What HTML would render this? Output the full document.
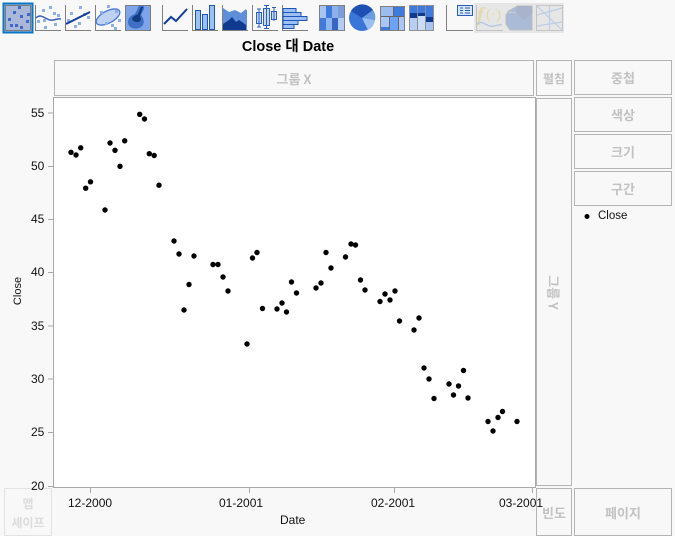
<!DOCTYPE html>
<html><head><meta charset="utf-8"><style>
html,body{margin:0;padding:0;background:#f8f8f8}
body{width:675px;height:536px;position:relative;overflow:hidden;font-family:"Liberation Sans","Noto Sans CJK KR",sans-serif}
.b{position:absolute;box-sizing:border-box;border:1px solid #b4b4b4;color:#c2c2c2;font-size:13px;font-weight:700;display:flex;align-items:center;justify-content:center;text-align:center;font-family:"Noto Sans CJK KR","Liberation Sans",sans-serif}
.t{position:absolute;font-size:12px;color:#111;line-height:14px;white-space:nowrap}
svg{position:absolute;left:0;top:0}
</style></head><body>
<svg width="675" height="536" viewBox="0 0 675 536" shape-rendering="crispEdges">
<!-- plot -->
<rect x="53.5" y="97.5" width="482" height="390" fill="#fff" stroke="#a8a8a8"/>
<path d="M48 113h5M48 166.500h5M48 219.500h5M48 272.500h5M48 326h5M48 379h5M48 432.500h5M48 486.500h5M90.500 488v5M249.500 488v5M394.500 488v5M532.500 488v5" stroke="#a8a8a8" fill="none"/>
<!-- icons -->
<g>
<rect x="3.500" y="3.500" width="29" height="29" fill="#a9b7d8" stroke="#0a78c8" stroke-width="2"/>
<rect x="5.500" y="5.500" width="25" height="25" fill="none" stroke="#7c7c7c"/>
<g fill="#3f68c4"><rect x="18" y="6" width="3" height="3"/><rect x="13" y="11" width="3" height="3"/><rect x="27" y="13" width="3" height="3"/><rect x="8" y="18" width="3" height="3"/><rect x="20" y="15" width="3" height="3"/><rect x="26" y="20" width="3" height="3"/><rect x="15" y="24" width="3" height="3"/><rect x="20" y="26" width="3" height="3"/><rect x="10" y="24" width="3" height="3"/></g>
<path d="M35.500 5v25.500H61" fill="none" stroke="#808080"/>
<g fill="#8fb0e6"><rect x="49" y="6" width="3" height="3"/><rect x="42" y="9" width="3" height="3"/><rect x="53" y="12" width="3" height="3"/><rect x="57" y="14" width="3" height="3"/><rect x="37" y="20" width="3" height="3"/><rect x="43" y="19" width="3" height="3"/><rect x="54" y="23" width="3" height="3"/><rect x="44" y="26" width="3" height="3"/></g>
<path d="M36 18c5-5 9 1 14 2s6-2 11-1" fill="none" stroke="#3a62b8" stroke-width="1.500" shape-rendering="auto"/>
<path d="M65.500 5v25.500H91" fill="none" stroke="#808080"/>
<g fill="#8fb0e6"><rect x="79" y="6" width="3" height="3"/><rect x="70" y="12" width="3" height="3"/><rect x="83" y="13" width="3" height="3"/><rect x="87" y="16" width="3" height="3"/><rect x="67" y="19" width="3" height="3"/><rect x="78" y="22" width="3" height="3"/><rect x="74" y="25" width="3" height="3"/></g>
<path d="M66 24L90 12" stroke="#123c9c" stroke-width="2" fill="none" shape-rendering="auto"/>
<path d="M95.500 5v25.500H121" fill="none" stroke="#808080"/>
<ellipse cx="108" cy="17" rx="13" ry="6" transform="rotate(-28 108 17)" fill="#c0d2f2" stroke="#4a78d8" stroke-width="1.300" shape-rendering="auto"/>
<g fill="#8fb0e6"><rect x="107" y="5" width="3" height="3"/><rect x="100" y="11" width="3" height="3"/><rect x="115" y="10" width="3" height="3"/><rect x="118" y="19" width="3" height="3"/><rect x="105" y="22" width="3" height="3"/><rect x="111" y="24" width="3" height="3"/><rect x="114" y="27" width="3" height="3"/></g>
<rect x="125.500" y="5.500" width="25" height="25" fill="#7ea5ea" stroke="#7c7c7c"/>
<path d="M139 6c4-1 6 0 5 3l-3 6c4 5 4 11-2 13s-11-1-11-6 4-7 7-8z" fill="#3f6fc4" shape-rendering="auto"/>
<path d="M141 7l2 0-3 9c2 3 1 6-3 6s-6-3-4-5 4-2 5-3z" fill="#123c80" shape-rendering="auto"/>
<path d="M162.500 5v25.500H188" fill="none" stroke="#808080"/>
<path d="M164 24l7-7 5 4 11-12" fill="none" stroke="#123c9c" stroke-width="2" shape-rendering="auto"/>
<path d="M192.500 5v25.500H218" fill="none" stroke="#808080"/>
<g fill="#9cc0f4" stroke="#1e55b8"><rect x="195.500" y="10.500" width="5" height="19"/><rect x="202.500" y="14.500" width="5" height="15"/><rect x="209.500" y="5.500" width="5" height="24"/></g>
<path d="M222.500 5v25.500H248" fill="none" stroke="#808080"/>
<path d="M223 8l6 4 6-2 6 3 5-4 1 2v19h-24z" fill="#5f8fd8" shape-rendering="auto"/>
<path d="M223 24l6-4 3-3 4 5 3-2 3 2 4 3v5h-23z" fill="#0f3a90" shape-rendering="auto"/>
<path d="M252.500 5v25.500H278" fill="none" stroke="#808080"/>
<g fill="#c8d8f0" stroke="#2a5fc8"><rect x="256.500" y="12.500" width="5" height="11"/><rect x="263.500" y="8.500" width="6" height="17"/><rect x="271.500" y="11.500" width="5" height="8"/></g>
<path d="M259 9v18M257 9h4M257 27h4M266.500 5v24M264 5.500h5M264 28.500h5M274 7v14M272 7.500h4" stroke="#2a5fc8" fill="none"/>
<path d="M282.500 5v25.500H308" fill="none" stroke="#808080"/>
<g fill="#9cc0f4" stroke="#1e55b8"><rect x="283" y="8.500" width="13" height="4"/><rect x="283" y="12.500" width="18" height="4"/><rect x="283" y="16.500" width="24" height="4"/><rect x="283" y="20.500" width="15" height="4"/><rect x="283" y="24.500" width="11" height="4"/></g>
<rect x="319.500" y="5.500" width="25" height="25" fill="#a8c4f4" stroke="#808080"/>
<g><rect x="326" y="6" width="6" height="12" fill="#3f7ade"/><rect x="332" y="6" width="6" height="12" fill="#8fb0ea"/><rect x="338" y="6" width="6" height="12" fill="#7a9edc"/><rect x="320" y="18" width="6" height="12" fill="#3f7ade"/><rect x="326" y="18" width="6" height="12" fill="#8fb4ee"/><rect x="332" y="18" width="6" height="12" fill="#3666c0"/><rect x="338" y="18" width="6" height="12" fill="#b2ccf6"/></g>
<circle cx="362" cy="18" r="13" fill="#3a76d8" shape-rendering="auto"/>
<path d="M362 18L351 11a13 13 0 0 1 22-1z" fill="#1e50b4" shape-rendering="auto"/>
<path d="M362 18l11-8a13 13 0 0 1 2 10z" fill="#6a9ce4" shape-rendering="auto"/>
<path d="M362 18l13 2a13 13 0 0 1-7 10z" fill="#9cbff2" shape-rendering="auto"/>
<rect x="380.500" y="6.500" width="24" height="24" fill="#9cbcf0" stroke="#808080"/>
<rect x="394" y="7" width="10" height="9" fill="#3f7ade"/><rect x="390" y="17" width="8" height="13" fill="#6ea2f4"/><rect x="399" y="17" width="5" height="13" fill="#a8c6f6"/><rect x="381" y="17" width="8" height="10" fill="#a8c6f6"/><rect x="381" y="27" width="8" height="3" fill="#3f7ade"/>
<path d="M393.500 7v9.500M381 16.500h23M389.500 17v13M398.500 17v13" stroke="#666" fill="none"/>
<rect x="409.500" y="5.500" width="24" height="25" fill="#a8c4f4" stroke="#909090"/>
<rect x="410" y="6" width="7" height="10" fill="#3f7ade"/><rect x="410" y="13" width="7" height="5" fill="#0f3a90"/><rect x="418" y="6" width="7" height="8" fill="#3f7ade"/><rect x="418" y="13" width="7" height="3" fill="#0f3a90"/><rect x="426" y="6" width="7" height="11" fill="#3f7ade"/><rect x="426" y="17" width="7" height="5" fill="#0f3a90"/><rect x="410" y="18" width="7" height="12" fill="#b8cef4"/><rect x="418" y="16" width="7" height="14" fill="#cddcf6"/><rect x="426" y="22" width="7" height="8" fill="#a8c4f0"/>
<path d="M417.500 6v24M425.500 6v24" stroke="#909090"/>
<path d="M446.500 5v25.500H473" fill="none" stroke="#808080"/>
<rect x="457.500" y="5.500" width="15" height="10" fill="#d8e6fa" stroke="#2a5cc0"/>
<path d="M460 8h3M460 10.500h3M460 13h3M465 8h5M465 10.500h5M465 13h5" stroke="#2a5cc0"/>
<rect x="474" y="3" width="90" height="30" fill="#e6e6e6"/>
<path d="M476.500 5v25.500H503" fill="none" stroke="#c2c2c2"/>
<text x="477" y="21" font-family="'Liberation Serif',serif" font-style="italic" font-weight="700" font-size="20" fill="#e2d9a8" shape-rendering="auto">f</text>
<text x="486" y="19" font-family="'Liberation Serif',serif" font-size="15" fill="#e2d9a8" shape-rendering="auto">(·)</text>
<path d="M477 24c5-4 8 1 13 2s8-2 12-1" fill="none" stroke="#b4c4e0" stroke-width="1.300" shape-rendering="auto"/>
<path d="M508.500 11l9-5h14.500v24h-22l-4-6v-9z" fill="#aabbd8" stroke="#bcbcbc" shape-rendering="auto"/>
<path d="M517 6l-1 7 8 7 8-6V6z" fill="#a9b4cc" shape-rendering="auto"/>
<path d="M508 12l8 1" stroke="#cfcfcf" fill="none" shape-rendering="auto"/>
<rect x="536.500" y="5.500" width="26" height="25" fill="#e6e6e6" stroke="#c4c4c4"/>
<path d="M537 6l25 24M537 15l25-7M537 26l25-4M549.500 6v24" stroke="#bccde6" stroke-width="1.200" fill="none" shape-rendering="auto"/>
</g>
<!-- points -->
<g fill="#000" shape-rendering="auto">
<circle cx="71" cy="152.300" r="2.700"/><circle cx="76" cy="155" r="2.700"/><circle cx="80.700" cy="147.800" r="2.700"/><circle cx="85.700" cy="188.200" r="2.700"/><circle cx="90.500" cy="181.800" r="2.700"/><circle cx="105" cy="210" r="2.700"/><circle cx="110" cy="143" r="2.700"/><circle cx="115" cy="150.300" r="2.700"/><circle cx="120" cy="166.300" r="2.700"/><circle cx="124.700" cy="140.800" r="2.700"/><circle cx="139.700" cy="114.300" r="2.700"/><circle cx="144.500" cy="119" r="2.700"/><circle cx="149.300" cy="153.700" r="2.700"/><circle cx="154.200" cy="155.500" r="2.700"/><circle cx="159" cy="185.200" r="2.700"/><circle cx="174" cy="241" r="2.700"/><circle cx="179" cy="254" r="2.700"/><circle cx="184" cy="310" r="2.700"/><circle cx="189" cy="284.500" r="2.700"/><circle cx="194" cy="256" r="2.700"/><circle cx="213" cy="264.500" r="2.700"/><circle cx="218" cy="264.500" r="2.700"/><circle cx="223" cy="277" r="2.700"/><circle cx="228" cy="291" r="2.700"/><circle cx="247" cy="344" r="2.700"/><circle cx="252.500" cy="258" r="2.700"/><circle cx="257" cy="252.500" r="2.700"/><circle cx="262.500" cy="308.500" r="2.700"/><circle cx="277" cy="309" r="2.700"/><circle cx="282" cy="303" r="2.700"/><circle cx="286.500" cy="312" r="2.700"/><circle cx="291.500" cy="282" r="2.700"/><circle cx="296.500" cy="293" r="2.700"/><circle cx="316" cy="288" r="2.700"/><circle cx="321" cy="283" r="2.700"/><circle cx="326" cy="252.500" r="2.700"/><circle cx="331" cy="268" r="2.700"/><circle cx="345.500" cy="257" r="2.700"/><circle cx="351" cy="244" r="2.700"/><circle cx="355.500" cy="245" r="2.700"/><circle cx="360.500" cy="280" r="2.700"/><circle cx="365" cy="290" r="2.700"/><circle cx="380" cy="301.500" r="2.700"/><circle cx="385" cy="294" r="2.700"/><circle cx="390" cy="300" r="2.700"/><circle cx="395" cy="291" r="2.700"/><circle cx="399.500" cy="321" r="2.700"/><circle cx="414" cy="330" r="2.700"/><circle cx="419" cy="318" r="2.700"/><circle cx="424" cy="368" r="2.700"/><circle cx="429" cy="379" r="2.700"/><circle cx="434" cy="398.500" r="2.700"/><circle cx="449" cy="384" r="2.700"/><circle cx="453.500" cy="395" r="2.700"/><circle cx="458.500" cy="386" r="2.700"/><circle cx="463.500" cy="370.500" r="2.700"/><circle cx="468" cy="398" r="2.700"/><circle cx="488" cy="421.500" r="2.700"/><circle cx="493" cy="431" r="2.700"/><circle cx="498" cy="417.500" r="2.700"/><circle cx="502.500" cy="411.500" r="2.700"/><circle cx="517" cy="421.500" r="2.700"/>
<circle cx="587" cy="216.500" r="2.500"/>
</g>
</svg>
<div class="t" style="left:0;width:576px;top:39px;text-align:center;font-weight:700;font-size:14.500px;line-height:16px;color:#000;font-family:'Liberation Sans','Noto Sans CJK KR',sans-serif">Close 대 Date</div>
<div class="b" style="left:54px;top:60px;width:480px;height:36px">그룹 X</div>
<div class="b" style="left:536px;top:60px;width:36px;height:36px;font-size:12px">펼침</div>
<div class="b" style="left:574px;top:60px;width:98px;height:35px">중첩</div>
<div class="b" style="left:574px;top:97px;width:98px;height:35px">색상</div>
<div class="b" style="left:574px;top:134px;width:98px;height:35px">크기</div>
<div class="b" style="left:574px;top:171px;width:98px;height:35px">구간</div>
<div class="b" style="left:536px;top:98px;width:36px;height:388px"><span style="transform:rotate(90deg);white-space:nowrap">그룹 Y</span></div>
<div class="b" style="left:536px;top:488px;width:36px;height:48px">빈도</div>
<div class="b" style="left:574px;top:488px;width:98px;height:48px">페이지</div>
<div class="b" style="left:4px;top:488px;width:48px;height:48px;border-color:#e2e2e2;color:#dcdcdc;line-height:19px;font-size:12px;padding-top:2px">맵<br>셰이프</div>
<div class="t" style="left:31px;top:106px">55</div>
<div class="t" style="left:31px;top:159px">50</div>
<div class="t" style="left:31px;top:212px">45</div>
<div class="t" style="left:31px;top:265px">40</div>
<div class="t" style="left:31px;top:319px">35</div>
<div class="t" style="left:31px;top:372px">30</div>
<div class="t" style="left:31px;top:425px">25</div>
<div class="t" style="left:31px;top:479px">20</div>
<div class="t" style="left:68px;top:496px">12-2000</div>
<div class="t" style="left:219px;top:496px">01-2001</div>
<div class="t" style="left:371px;top:496px">02-2001</div>
<div class="t" style="left:499px;top:496px">03-2001</div>
<div class="t" style="left:280px;top:513px">Date</div>
<div class="t" style="left:0px;top:284px;width:36px;text-align:center;transform:rotate(-90deg);font-size:11px">Close</div>
<div class="t" style="left:598px;top:209px;font-size:11.500px">Close</div>
</body></html>
